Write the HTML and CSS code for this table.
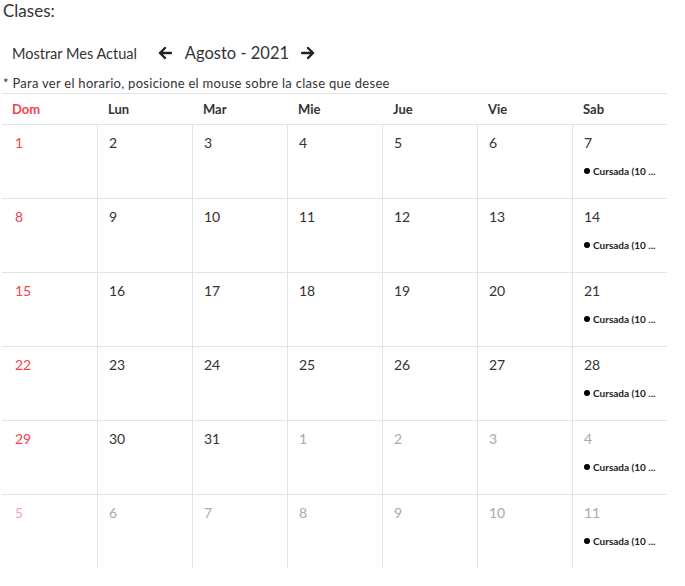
FILE: index.html
```html
<!DOCTYPE html>
<html lang="es">
<head>
<meta charset="utf-8">
<link rel="stylesheet" href="styles.css">
</head>
<body>
<div class="page">
  <div class="title">Clases:</div>
  <div class="toolbar">
    <span class="today">Mostrar Mes Actual</span>
    <span class="arrow"><svg width="14" height="14" viewBox="0 0 14 14"><path d="M13 7H2M7 2L2 7l5 5" fill="none" stroke="#222" stroke-width="2.4" stroke-linecap="round" stroke-linejoin="round"/></svg></span>
    <span class="month">Agosto - 2021</span>
    <span class="arrow"><svg width="14" height="14" viewBox="0 0 14 14"><path d="M1 7h11M7 2l5 5-5 5" fill="none" stroke="#222" stroke-width="2.4" stroke-linecap="round" stroke-linejoin="round"/></svg></span>
  </div>
  <div class="note">* Para ver el horario, posicione el mouse sobre la clase que desee</div>
  <div class="cal">
    <div class="head sun">Dom</div><div class="head">Lun</div><div class="head">Mar</div><div class="head">Mie</div><div class="head">Jue</div><div class="head">Vie</div><div class="head">Sab</div>

    <div class="cell sun"><span class="num">1</span></div><div class="cell"><span class="num">2</span></div><div class="cell"><span class="num">3</span></div><div class="cell"><span class="num">4</span></div><div class="cell"><span class="num">5</span></div><div class="cell"><span class="num">6</span></div><div class="cell"><span class="num">7</span><div class="ev">Cursada (10 ...</div></div>

    <div class="cell sun"><span class="num">8</span></div><div class="cell"><span class="num">9</span></div><div class="cell"><span class="num">10</span></div><div class="cell"><span class="num">11</span></div><div class="cell"><span class="num">12</span></div><div class="cell"><span class="num">13</span></div><div class="cell"><span class="num">14</span><div class="ev">Cursada (10 ...</div></div>

    <div class="cell sun"><span class="num">15</span></div><div class="cell"><span class="num">16</span></div><div class="cell"><span class="num">17</span></div><div class="cell"><span class="num">18</span></div><div class="cell"><span class="num">19</span></div><div class="cell"><span class="num">20</span></div><div class="cell"><span class="num">21</span><div class="ev">Cursada (10 ...</div></div>

    <div class="cell sun"><span class="num">22</span></div><div class="cell"><span class="num">23</span></div><div class="cell"><span class="num">24</span></div><div class="cell"><span class="num">25</span></div><div class="cell"><span class="num">26</span></div><div class="cell"><span class="num">27</span></div><div class="cell"><span class="num">28</span><div class="ev">Cursada (10 ...</div></div>

    <div class="cell sun"><span class="num">29</span></div><div class="cell"><span class="num">30</span></div><div class="cell"><span class="num">31</span></div><div class="cell other"><span class="num">1</span></div><div class="cell other"><span class="num">2</span></div><div class="cell other"><span class="num">3</span></div><div class="cell other"><span class="num">4</span><div class="ev">Cursada (10 ...</div></div>

    <div class="cell sun other last"><span class="num">5</span></div><div class="cell other last"><span class="num">6</span></div><div class="cell other last"><span class="num">7</span></div><div class="cell other last"><span class="num">8</span></div><div class="cell other last"><span class="num">9</span></div><div class="cell other last"><span class="num">10</span></div><div class="cell other last"><span class="num">11</span><div class="ev">Cursada (10 ...</div></div>
  </div>
</div>
</body>
</html>
```

FILE: styles.css
```css
* { box-sizing: border-box; }
body {
  margin: 0;
  font-family: "Lato", "Open Sans", sans-serif;
  color: #333;
  background: #fff;
}
.page { padding: 0 0 0 3px; }
.title {
  font-size: 17px;
  line-height: 22px;
  height: 22px;
}
.toolbar {
  display: flex;
  align-items: center;
  height: 32px;
  margin-top: 15px;
  padding-left: 9px;
}
.today { font-size: 14.5px; }
.arrow { display: flex; margin-left: 21px; }
.month { font-size: 16.5px; margin-left: 13px; }
.toolbar .month + .arrow { margin-left: 12px; }
.note {
  font-size: 13px;
  letter-spacing: 0.28px;
  line-height: 16px;
  margin-top: 6px;
  height: 18px;
}
.cal {
  display: grid;
  grid-template-columns: repeat(7, 95px);
  width: 665px;
  margin-left: -1px;
}
.head {
  border-top: 1px solid #e3e3e3;
  height: 31px;
  display: flex;
  align-items: center;
  padding-left: 11px;
  font-weight: bold;
  font-size: 13px;
  color: #333;
}
.head.sun { color: #f5424d; padding-left: 10px; }
.cell {
  border-top: 1px solid #e3e3e3;
  border-left: 1px solid #e3e3e3;
  height: 74px;
  padding: 8px 0 0 11px;
}
.cell.sun { border-left: none; padding-left: 13px; }
.num {
  display: block;
  font-size: 14px;
  line-height: 20px;
  color: #333;
}
.sun .num { color: #f5424d; }
.other .num { color: #aaa; }
.sun.other .num { color: #f7a6a8; }
.ev {
  margin-top: 12px;
  font-size: 10px;
  font-weight: bold;
  color: #222;
  line-height: 12px;
  white-space: nowrap;
}
.ev::before {
  content: "";
  display: inline-block;
  width: 6px;
  height: 6px;
  border-radius: 50%;
  background: #000;
  margin-right: 3px;
  vertical-align: 1px;
}
```
